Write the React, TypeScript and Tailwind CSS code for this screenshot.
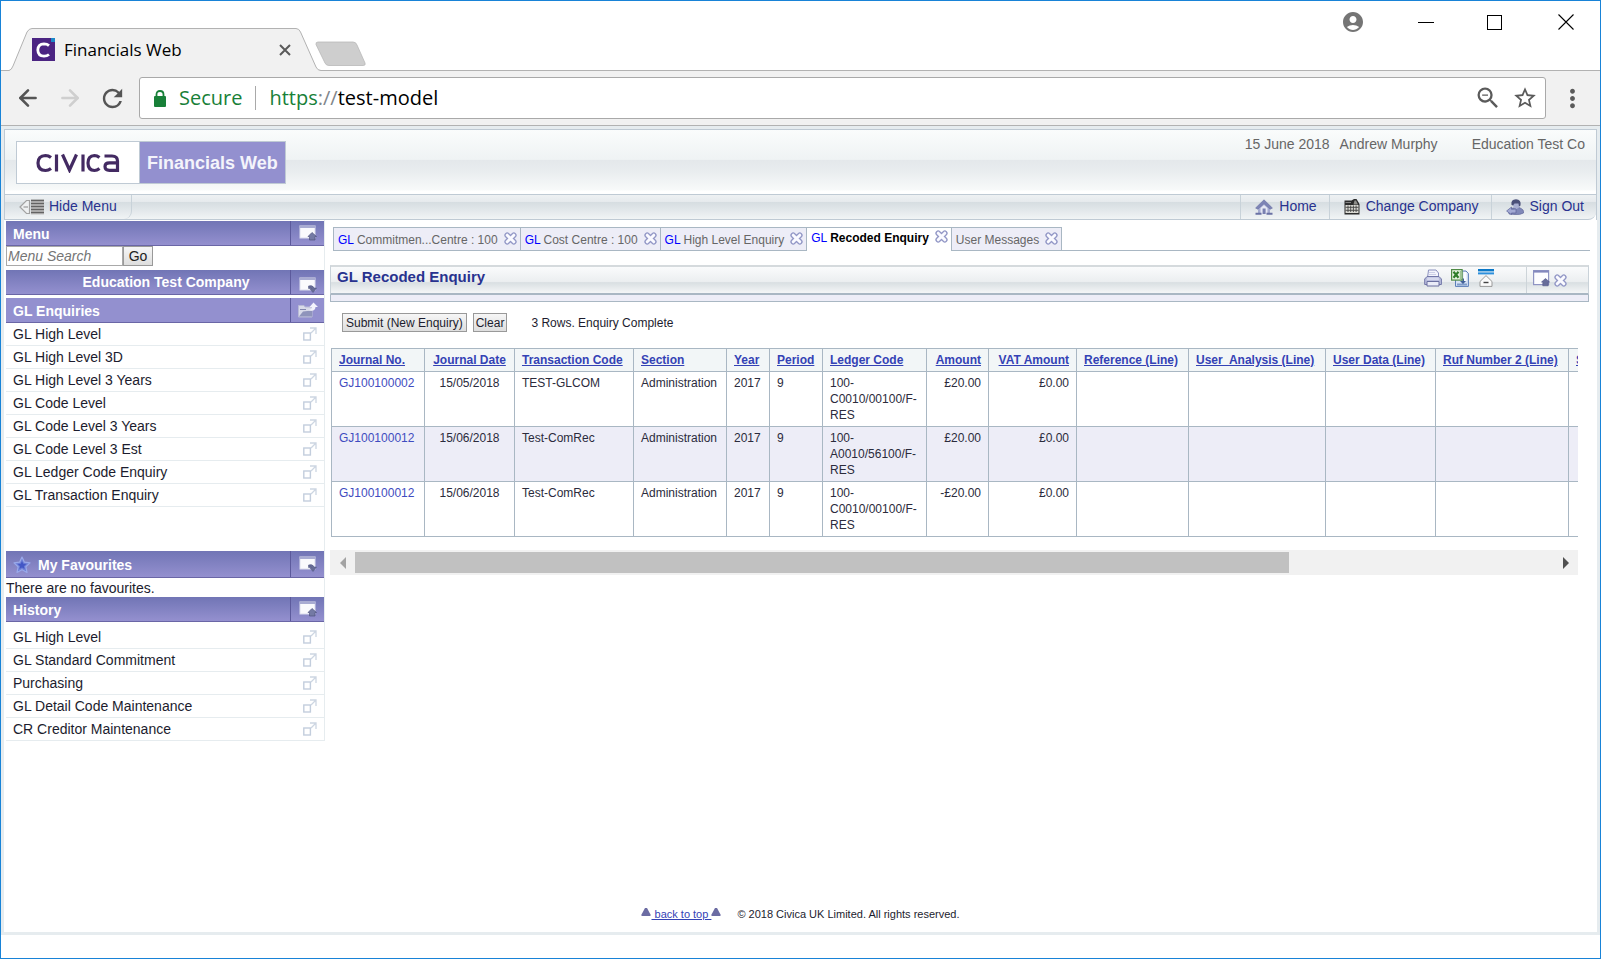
import { useState } from "react";
import type { ReactNode } from "react";
import { ArrowLeft, ArrowRight } from "lucide-react";
import { MdAccountCircle, MdMoreVert, MdRefresh, MdStarBorder, MdZoomOut } from "react-icons/md";

const enquiries = [
  "GL High Level",
  "GL High Level 3D",
  "GL High Level 3 Years",
  "GL Code Level",
  "GL Code Level 3 Years",
  "GL Code Level 3 Est",
  "GL Ledger Code Enquiry",
  "GL Transaction Enquiry",
];

const history = [
  "GL High Level",
  "GL Standard Commitment",
  "Purchasing",
  "GL Detail Code Maintenance",
  "CR Creditor Maintenance",
];

const tabs = [
  { id: "commitment", prefix: "GL", label: "Commitmen...Centre : 100" },
  { id: "cost", prefix: "GL", label: "Cost Centre : 100" },
  { id: "high", prefix: "GL", label: "High Level Enquiry" },
  { id: "recoded", prefix: "GL", label: "Recoded Enquiry" },
  { id: "messages", prefix: "", label: "User Messages" },
];

const columns = [
  { label: "Journal No.", width: "w-[93px]", align: "text-left" },
  { label: "Journal Date", width: "w-[90px]", align: "text-center" },
  { label: "Transaction Code", width: "w-[119px]", align: "text-left" },
  { label: "Section", width: "w-[93px]", align: "text-left" },
  { label: "Year", width: "w-[43px]", align: "text-left" },
  { label: "Period", width: "w-[53px]", align: "text-left" },
  { label: "Ledger Code", width: "w-[104px]", align: "text-left" },
  { label: "Amount", width: "w-[62px]", align: "text-right" },
  { label: "VAT Amount", width: "w-[88px]", align: "text-right" },
  { label: "Reference (Line)", width: "w-[112px]", align: "text-left" },
  { label: "User  Analysis (Line)", width: "w-[137px]", align: "text-left" },
  { label: "User Data (Line)", width: "w-[110px]", align: "text-left" },
  { label: "Ruf Number 2 (Line)", width: "w-[133px]", align: "text-left" },
  { label: "Source", width: "w-[110px]", align: "text-left" },
];

const rows = [
  ["GJ100100002", "15/05/2018", "TEST-GLCOM", "Administration", "2017", "9", "100-C0010/00100/F-RES", "£20.00", "£0.00", "", "", "", "", ""],
  ["GJ100100012", "15/06/2018", "Test-ComRec", "Administration", "2017", "9", "100-A0010/56100/F-RES", "£20.00", "£0.00", "", "", "", "", ""],
  ["GJ100100012", "15/06/2018", "Test-ComRec", "Administration", "2017", "9", "100-C0010/00100/F-RES", "-£20.00", "£0.00", "", "", "", "", ""],
];

function CloseCross() {
  return (
    <svg viewBox="0 0 13 13" className="size-[13px] shrink-0" fill="none" strokeLinecap="round">
      <path d="M3.2 3.2 L9.8 9.8 M9.8 3.2 L3.2 9.8" stroke="#9297c6" strokeWidth="5.6" />
      <path d="M3.2 3.2 L9.8 9.8 M9.8 3.2 L3.2 9.8" stroke="#fafaff" strokeWidth="3" />
    </svg>
  );
}

function PanelIcon({ down = false }: { down?: boolean }) {
  return (
    <svg viewBox="0 0 18 16" className="h-4 w-[18px]">
      <rect x="1" y="1" width="15" height="12" fill="#fafafd" stroke="#dcdded" />
      <rect x="0.5" y="0.5" width="16" height="2.5" fill="#a9acd2" />
      {down ? (
        <path d="M9.5 9 Q13 7.5 15.5 11 H17.5 L14 15.5 L10.500 11.500 H12.500 Q11.500 10.500 9.500 11.500 Z" fill="#666b95" stroke="#4f5480" strokeWidth="0.5" />
      ) : (
        <path d="M13 7.500 L17.500 11.500 H16 V15 H10.500 V11.500 H9 Z" fill="#747aa4" stroke="#50557f" strokeWidth="0.7" />
      )}
    </svg>
  );
}

function FolderIcon() {
  return (
    <svg viewBox="0 0 20 16" className="h-4 w-5">
      <path d="M0.5 3.5 H6 L7 5 H14 V15 H0.5 Z" fill="#d9dbe9" stroke="#b9bbd6" />
      <path d="M1 14.5 L5 9.5 L14 8.5 V14.5 Z" fill="#8f94bb" />
      <path d="M2 7.5 H8" stroke="#8387ae" />
      <path d="M10 8 Q13.5 8 14 5 H11.5 L15.5 0.5 L20 5 H17.5 Q17 10.5 10 8 Z" fill="#f4f4fc" />
    </svg>
  );
}

function OpenIcon() {
  return (
    <svg viewBox="0 0 14 14" className="size-3.5" fill="none">
      <rect x="0.8" y="6" width="6.6" height="7" stroke="#c3cedd" strokeWidth="1.4" />
      <path d="M7 1 H13 V7 M13 1 L8 6" stroke="#cdd6e2" strokeWidth="1.3" />
    </svg>
  );
}

function FavouriteStar() {
  return (
    <svg viewBox="0 0 18 18" className="size-[18px]">
      <path d="M9 1 L11.4 6.2 L17 6.9 L12.9 10.8 L14 16.5 L9 13.7 L4 16.5 L5.1 10.8 L1 6.9 L6.6 6.2 Z" fill="#6f80d6" stroke="#9aa9ea" strokeWidth="1.2" strokeLinejoin="round" />
      <path d="M9 5 L10.3 7.8 L13.2 8.1 L11 10.2 L11.6 13 L9 11.6 L6.4 13 L7 10.2 L4.8 8.1 L7.7 7.8 Z" fill="#4357c6" />
    </svg>
  );
}

function HideMenuIcon() {
  return (
    <svg viewBox="0 0 26 16" className="h-4 w-[26px]" fill="none">
      <path d="M1 8 L7.5 1.5 H10.5 V14.5 H7.5 Z" fill="#eef0f1" stroke="#a2a2a2" strokeWidth="1.2" />
      <path d="M4.5 8 H9" stroke="#8a8a8a" />
      <rect x="12" y="0.5" width="13" height="15" fill="#c2c2c2" />
      <path d="M12 1.5 H25 M12 4.5 H25 M12 7.5 H25 M12 10.5 H25 M12 13.5 H25" stroke="#636363" strokeWidth="1.6" />
    </svg>
  );
}

function HomeIcon() {
  return (
    <svg viewBox="0 0 18 16" className="h-4 w-[18px]">
      <path d="M3 8 V14.5 H15 V8 L9 3 Z" fill="#a5abd0" />
      <path d="M0.6 9 L9 0.8 L17.4 9 L15.2 10.2 L9 4.6 L2.8 10.2 Z" fill="#7d84b5" stroke="#6a71a4" strokeWidth="0.6" />
      <path d="M5.5 9 L9 6 L12.5 9 V15 H5.5 Z" fill="#e6e8f4" />
      <rect x="7.6" y="9.5" width="3" height="5.5" fill="#7980b0" />
      <path d="M0.5 14.8 H6.5 M11.5 14.8 H17.5" stroke="#6a71a4" strokeWidth="2" />
    </svg>
  );
}

function CompanyIcon() {
  return (
    <svg viewBox="0 0 16 16" className="size-4">
      <path d="M0.5 1.5 H7.5 L10 0 H12.5 L15.5 5 V15.5 H0.5 Z" fill="#2c2c2c" />
      <path d="M1.5 3.5 H7" stroke="#8d8d8d" strokeWidth="0.9" />
      <path d="M9.5 5.5 L10.5 1.5 H12 L14 5.5 Z" fill="#8f8f8b" />
      <path d="M1.5 6 H14.5 V14 H1.5 Z" fill="#dadad4" />
      <path d="M1.5 8.3 H14.5 M1.5 11.3 H14.5" stroke="#444" strokeWidth="0.9" />
      <path d="M4 6.5 V13 M6.7 6.5 V13 M9.4 6.5 V13 M12.1 6.5 V13" stroke="#444" strokeWidth="0.9" />
    </svg>
  );
}

function SignOutIcon() {
  return (
    <svg viewBox="0 0 18 16" className="h-4 w-[18px]">
      <path d="M3 15 Q2 10 7 9 L13 8.5 Q18.500 10.500 17.5 14 Q14 16 9 15.5 Z" fill="#8088b8" stroke="#5f6698" strokeWidth="0.7" />
      <path d="M7 3 H13.5 L14 6.5 Q13 9.5 10.5 10 Q7.5 9.5 7 6.5 Z" fill="#a9afd2" />
      <path d="M5.500 6 Q4.500 0.500 10 0.300 Q15.500 0.500 14.500 6.500 L13 7.500 L12.500 4.500 H8.500 L7 6.500 Z" fill="#4b5079" />
      <path d="M0.600 12 L5.5 8 V10.3 L10 10 V14 H5.5 V15.7 Z" fill="#a3aad4" stroke="#5c639a" strokeWidth="0.7" />
    </svg>
  );
}

function PrinterIcon() {
  return (
    <svg viewBox="0 0 18 18" className="size-[18px]">
      <path d="M4.5 1 H12 L14.5 4 V9 H3.5 Z" fill="#f3f4fc" stroke="#8b90be" />
      <path d="M0.7 10 L3 7.5 H15 L17.4 10 V15.5 H0.7 Z" fill="#b9bddd" stroke="#7277a8" />
      <path d="M3.5 8.5 H14.5 L15 11 H3 Z" fill="#d6d9ee" />
      <path d="M3 12.5 H15 V17 H3 Z" fill="#e9ebf7" stroke="#6a6fa0" />
      <path d="M5 3.5 H11 M5 5.5 H12" stroke="#c3c7e2" strokeWidth="0.8" />
    </svg>
  );
}

function ExcelIcon() {
  return (
    <svg viewBox="0 0 18 18" className="size-[18px]">
      <path d="M4.5 2 H15 L17.4 4.5 V17.4 H4.5 Z" fill="#d6e2f5" stroke="#5a7db8" />
      <path d="M12.5 3 H15.5 V12 H12.5 Z" fill="#fafcff" />
      <path d="M6 14.5 H16 V16.5 H6 Z" fill="#7f9cc9" />
      <path d="M11.5 9.5 H13 V12 H15 L12 15 L9 12 H11.5 Z" fill="#3f5f98" />
      <rect x="0.6" y="0.6" width="10.5" height="10.5" fill="#eaf4e4" stroke="#4f8a45" strokeWidth="1.2" />
      <path d="M2.5 2.8 L7.5 8.8 M7.5 2.8 L2.5 8.8" stroke="#2f7d2a" strokeWidth="2.2" />
      <path d="M9.3 2 V10" stroke="#8ab780" />
    </svg>
  );
}

function CollapseIcon() {
  return (
    <svg viewBox="0 0 16 18" className="h-[18px] w-4">
      <rect x="0" y="0" width="16" height="2.4" fill="#0a78c8" />
      <rect x="0" y="3.4" width="16" height="2" fill="#2c8fdc" />
      <path d="M8 6.6 L14 12.5 V17.4 H2 V12.5 Z" fill="#fbfbfb" stroke="#999" />
      <path d="M5.5 13.5 H10.5" stroke="#444" strokeWidth="1.4" />
    </svg>
  );
}

function MaximiseIcon() {
  return (
    <svg viewBox="0 0 17 17" className="size-[17px]">
      <rect x="0.6" y="0.6" width="15" height="14" fill="#fdfdff" stroke="#8f94c3" strokeWidth="1.2" />
      <rect x="0.6" y="0.6" width="15" height="2" fill="#8388bd" />
      <path d="M12.5 8.5 L16.5 12 H15.200 V15.8 H9.800 V12 H8.500 Z" fill="#676c9a" stroke="#4f5486" strokeWidth="0.6" />
    </svg>
  );
}

function BrowserFrame() {
  return (
    <header className="bg-white">
      <div className="flex h-[70px] items-start justify-between border-b border-[#b2b2b2]">
        <div className="flex">
          {/* Active tab, one pixel over the strip's border so it joins the toolbar */}
          <div className="relative mt-[27px] ml-2 h-[43px] w-[312px]">
            <svg viewBox="0 0 312 43" className="absolute inset-0 h-full w-full">
              <path d="M0 42.5 Q2.5 42 4 38 L18 4 Q20 0.5 23 0.5 H287 Q290 0.5 291.5 4 L307 39 Q308.5 42.5 312 42.5 V43 H0 Z" fill="#f1f1f1" />
              <path d="M0 42.5 Q2.5 42 4 38 L18 4 Q20 0.5 23 0.5 H287 Q290 0.5 291.5 4 L307 39 Q308.5 42.5 312 42.5" fill="none" stroke="#b2b2b2" />
            </svg>
            <div className="relative flex h-full items-center pr-[30px] pl-[23px]">
              <svg viewBox="0 0 23 23" className="size-[23px]">
                <rect width="23" height="23" fill="#4b2482" />
                <rect x="19" width="4" height="4" fill="#1b86c8" />
                <path d="M17 7.6 Q15 5.8 12 5.8 Q6 6 5.8 12 Q6 18 12 18.2 Q15 18.2 17 16.5" fill="none" stroke="#fff" strokeWidth="2.8" />
              </svg>
              <span className="ml-[9px] flex-1 text-[17px] leading-6 text-black">Financials Web</span>
              <button type="button" aria-label="Close tab">
                <svg viewBox="0 0 12 12" className="size-3" stroke="#5a5a5a" strokeWidth="2">
                  <path d="M1 1 L11 11 M11 1 L1 11" />
                </svg>
              </button>
            </div>
          </div>
          <button type="button" aria-label="New tab" className="mt-[37px] -ml-1.5">
            <svg viewBox="0 0 52 27" className="h-[27px] w-[52px]">
              <path d="M3 1 H38 Q41 1 42 4 L50 22 Q51 24.5 48 24.5 H14 Q11 24.5 10 22 L1 3.5 Q0.5 1 3 1 Z" fill="#cecece" stroke="#b9b9b9" strokeWidth="0.8" />
            </svg>
          </button>
        </div>
        <div className="flex items-center pt-[9px] pr-[26px]">
          <MdAccountCircle className="mr-[53px] size-6 text-[#757575]" />
          <button type="button" aria-label="Minimise" className="mr-[53px] h-px w-4 bg-black" />
          <button type="button" aria-label="Maximise" className="mr-14 size-[15px] border border-black" />
          <button type="button" aria-label="Close">
            <svg viewBox="0 0 16 16" className="size-4" stroke="#000" strokeWidth="1.1">
              <path d="M0.5 0.5 L15.5 15.5 M15.5 0.5 L0.5 15.5" />
            </svg>
          </button>
        </div>
      </div>
      <div className="flex h-[55px] items-center border-b border-[#b2b2b2] bg-[#f1f1f1] pr-[13px] pl-3.5">
        <button type="button" aria-label="Back">
          <ArrowLeft className="size-[26px] text-[#555]" strokeWidth={2.4} />
        </button>
        <button type="button" aria-label="Forward" className="ml-4">
          <ArrowRight className="size-[26px] text-[#cfcfcf]" strokeWidth={2.4} />
        </button>
        <button type="button" aria-label="Reload" className="ml-[15px]">
          <MdRefresh className="size-[29px] text-[#555]" />
        </button>
        <div className="ml-3 flex h-[42px] flex-1 items-center rounded-[3px] border border-[#a9a9a9] bg-white pr-[7px] pl-3.5">
          <svg viewBox="0 0 12 17" className="h-[17px] w-3">
            <rect y="6" width="12" height="11" rx="1" fill="#188038" />
            <path d="M2.5 7 V4.5 Q2.5 1 6 1 Q9.5 1 9.5 4.5 V7" fill="none" stroke="#188038" strokeWidth="1.8" />
          </svg>
          <span className="ml-[13px] text-[20px] text-[#188038]">Secure</span>
          <span className="mx-[13px] h-6 w-px bg-[#a9a9a9]" />
          <span className="flex-1 text-[20px] text-black">
            <span className="text-[#188038]">https</span>
            <span className="text-[#80868b]">://</span>test-model
          </span>
          <MdZoomOut className="size-[28px] text-[#5a5a5a]" />
          <MdStarBorder className="ml-2.5 size-[26px] text-[#5a5a5a]" />
        </div>
        <button type="button" aria-label="Browser menu" className="ml-3">
          <MdMoreVert className="size-[29px] text-[#5a5a5a]" />
        </button>
      </div>
    </header>
  );
}

function NavLink({ icon, children }: { icon: ReactNode; children: ReactNode }) {
  return (
    <a href="#" className="flex h-full items-center gap-1.5 border-l border-[#c8d2d9] pr-3 pl-3.5 text-[14px] text-[#28328f]">
      {icon}
      <span className="pb-0.5">{children}</span>
    </a>
  );
}

function AppHeader() {
  return (
    <div className="border border-b-0 border-[#bfcad4]">
      <div className="flex h-[65px] items-start justify-between border-b border-[#bfcad4] bg-[linear-gradient(to_bottom,#fafcfc_0%,#eff3f4_46%,#e4e8eb_47%,#e9edef_65%,#f8fafa_94%,#ffffff_95%)] pl-[11px]">
        <div className="mt-[11px] flex h-[43px] border border-[#bfcad4] bg-white">
          <div className="flex w-[123px] items-center justify-center border-r border-[#bfcad4]">
            <svg viewBox="0 0 84 20" className="h-5 w-[84px]" fill="none" stroke="#432a62" strokeWidth="3.2">
              <path d="M15 4.5 Q12.5 2.5 9.5 2.5 Q2 2.8 2 10 Q2 17.2 9.5 17.5 Q12.5 17.5 15 15.5" />
              <path d="M20.5 1.5 V18.5" />
              <path d="M26.5 1.5 L33.5 17 L40.5 1.5" />
              <path d="M47 1.5 V18.5" />
              <path d="M63.5 4.5 Q61 2.5 58.5 2.5 Q52 2.8 52 10 Q52 17.2 58.5 17.5 Q61 17.5 63.5 15.5" />
              <path d="M68.5 3 H76 Q81.5 3 81.5 8 V17.3 H73.5 Q69 17.3 69 13.5 Q69 9.8 73.5 9.8 H81" />
            </svg>
          </div>
          <div className="flex items-center bg-[#9390cf] px-[7px] pt-0.5 text-[18px] font-bold text-[#f4f4fb]">Financials Web</div>
        </div>
        <div className="flex pt-1.5 pr-[11px] text-[14px] leading-4 text-[#666]">
          <span>15 June 2018</span>
          <span className="ml-2.5">Andrew Murphy</span>
          <span className="ml-[34px]">Education Test Co</span>
        </div>
      </div>
      <nav className="flex h-[25px] items-center justify-between rounded-br-lg border-b border-[#bfcad4] bg-[linear-gradient(to_bottom,#eef1f3_0%,#e6eaed_28%,#d6dde1_30%,#e3e8eb_65%,#f1f4f5_100%)]">
        <button type="button" className="flex h-full items-center gap-1 rounded-br-lg border-r border-[#c8d2d9] pr-3.5 pl-3.5 text-[14px] text-[#28328f]">
          <HideMenuIcon />
          <span className="pb-0.5">Hide Menu</span>
        </button>
        <div className="flex h-full">
          <NavLink icon={<HomeIcon />}>Home</NavLink>
          <NavLink icon={<CompanyIcon />}>Change Company</NavLink>
          <NavLink icon={<SignOutIcon />}>Sign Out</NavLink>
        </div>
      </nav>
    </div>
  );
}

function PanelHeader({ title, icon, star = false, centered = false, flat = false }: { title: string; icon: ReactNode; star?: boolean; centered?: boolean; flat?: boolean }) {
  const layout = centered ? "justify-center pl-9" : star ? "pt-0.5 pl-[7px]" : "pt-0.5 pl-[7px]";

  return (
    <div className={`flex border-b border-[#6a66a6] text-[14px] font-bold text-white ${star ? "h-[27px]" : "h-[25px]"} ${flat ? "bg-[#9390cf]" : "bg-linear-to-b from-[#7175b5] to-[#9490cf]"}`}>
      <h2 className={`flex flex-1 items-center gap-[7px] ${layout}`}>
        {star && <FavouriteStar />}
        {title}
      </h2>
      <button type="button" aria-label={`Toggle ${title}`} className={`flex w-[34px] items-center justify-center border-l border-[#5c5a9c] ${centered ? "pt-1.5" : ""}`}>
        {icon}
      </button>
    </div>
  );
}

function MenuList({ items }: { items: string[] }) {
  return (
    <ul>
      {items.map((item) => (
        <li key={item} className="flex h-[23px] items-center justify-between border-b border-[#e6ecef] px-[7px]">
          <a href="#" className="text-[14px] leading-5 text-[#1c1c2e]">{item}</a>
          <button type="button" aria-label={`Open ${item} in new window`}>
            <OpenIcon />
          </button>
        </li>
      ))}
    </ul>
  );
}

function Sidebar() {
  const [search, setSearch] = useState("");

  return (
    <aside className="w-[319px] shrink-0 self-start border-r border-[#e6ecef] pt-px">
      <PanelHeader title="Menu" icon={<PanelIcon />} />
      <form className="flex h-5" onSubmit={(e) => e.preventDefault()}>
        <input
          type="text"
          aria-label="Menu Search"
          placeholder="Menu Search"
          value={search}
          onChange={(e) => setSearch(e.target.value)}
          className="w-[117px] border border-[#a9a9a9] px-px text-[14px] italic placeholder:text-[#757575]"
        />
        <button type="submit" className="w-[30px] border border-[#999] bg-linear-to-b from-[#f6f6f6] to-[#dedede] text-[14px] leading-4 text-[#222]">
          Go
        </button>
      </form>
      <div className="mt-1">
        <PanelHeader title="Education Test Company" icon={<PanelIcon down />} centered />
      </div>
      <div className="mt-[3px]">
        <PanelHeader title="GL Enquiries" icon={<FolderIcon />} flat />
      </div>
      <MenuList items={enquiries} />
      <div className="mt-11">
        <PanelHeader title="My Favourites" icon={<PanelIcon down />} star />
      </div>
      <p className="pt-0.5 text-[14px] leading-[17px] text-[#1c1c2e]">There are no favourites.</p>
      <PanelHeader title="History" icon={<PanelIcon />} />
      <div className="mt-1">
        <MenuList items={history} />
      </div>
    </aside>
  );
}

function TabBar() {
  const [active, setActive] = useState("recoded");

  return (
    <div className="mt-[7px] mr-px ml-[3px] flex h-6">
      {tabs.map((tab, index) => (
        <div
          key={tab.id}
          className={`flex items-center gap-1.5 border-t border-r border-[#a9b7c3] pr-[3px] pl-1 text-[12px] ${index === 0 ? "border-l" : ""} ${tab.id === active
              ? "bg-white pb-[3px] font-bold text-black"
              : "border-b bg-[#ededf7] pt-0.5 text-[#666]"
            }`}
        >
          <button type="button" onClick={() => setActive(tab.id)} className="whitespace-nowrap">
            {tab.prefix && <span className="font-normal text-[#0000ff]">{tab.prefix} </span>}
            {tab.label}
          </button>
          <button type="button" aria-label={`Close ${tab.label}`} className="pb-1">
            <CloseCross />
          </button>
        </div>
      ))}
      <div className="flex-1 border-b border-[#a9b7c3]" />
    </div>
  );
}

function TitleBar() {
  return (
    <div className="mt-3.5 mr-0.5">
      <div className="flex h-[30px] justify-between border-x border-t-2 border-b-2 border-x-[#c9d2d9] border-t-[#d5dadd] border-b-[#a9b7c3] bg-[linear-gradient(to_bottom,#fafbfc_0%,#ebeef0_57%,#d9dfe2_60%,#f4f6f7_100%)]">
        <h1 className="pl-1.5 text-[15px] leading-5 font-bold text-[#28328f]">GL Recoded Enquiry</h1>
        <div className="flex">
          <div className="flex items-center gap-[9px] pr-8 pb-1">
            <button type="button" aria-label="Print"><PrinterIcon /></button>
            <button type="button" aria-label="Export to Excel"><ExcelIcon /></button>
            <button type="button" aria-label="Collapse"><CollapseIcon /></button>
          </div>
          <div className="flex items-center gap-1 border-l border-[#cdd4d9] pr-[21px] pb-1 pl-1.5">
            <button type="button" aria-label="Maximise panel"><MaximiseIcon /></button>
            <button type="button" aria-label="Close panel" className="pt-1"><CloseCross /></button>
          </div>
        </div>
      </div>
      <div className="h-[7px] border-x border-b border-[#a9b7c3] bg-[#ededf7]" />
    </div>
  );
}

function ResultsTable() {
  return (
    <div className="mt-4 mr-[13px] overflow-hidden pl-px">
      <table className="w-[1348px] table-fixed border-collapse text-[12px] leading-4 text-[#2b2b3c]">
        <thead>
          <tr className="h-[23px] bg-[#f2f6f7]">
            {columns.map((col) => (
              <th key={col.label} scope="col" className={`border border-[#a9b7c3] px-[7px] font-bold ${col.width} ${col.align}`}>
                <a href="#" className="whitespace-pre text-[#3442b5] underline">{col.label}</a>
              </th>
            ))}
          </tr>
        </thead>
        <tbody>
          {rows.map((row, index) => (
            <tr key={index} className="h-[55px] even:bg-[#ededf7]">
              {row.map((cell, i) => (
                <td key={i} className={`border border-[#a9b7c3] px-[7px] pt-[3px] align-top ${columns[i].align}`}>
                  {i === 0 ? <a href="#" className="text-[#3f4cc0]">{cell}</a> : cell}
                </td>
              ))}
            </tr>
          ))}
        </tbody>
      </table>
    </div>
  );
}

function ScrollStrip() {
  return (
    <div className="mt-[13px] mr-[13px] flex h-[25px] items-center bg-[#f1f1f1]">
      <button type="button" aria-label="Scroll left" className="flex w-[25px] justify-center">
        <svg viewBox="0 0 6 12" className="h-3 w-1.5" fill="#a3a3a3"><path d="M6 0 V12 L0 6 Z" /></svg>
      </button>
      <div className="flex-1">
        <div className="h-[21px] w-[78%] bg-[#c1c1c1]" />
      </div>
      <button type="button" aria-label="Scroll right" className="flex w-[25px] justify-center">
        <svg viewBox="0 0 6 12" className="h-3 w-1.5" fill="#505050"><path d="M0 0 V12 L6 6 Z" /></svg>
      </button>
    </div>
  );
}

function Triangle() {
  return (
    <svg viewBox="0 0 10 8" className="mb-1 h-2 w-2.5" fill="#6c6ca3">
      <path d="M4 0 H6 L9.5 6.5 V8 H0.5 V6.5 Z" />
    </svg>
  );
}

export default function App() {
  return (
    <div className="flex min-h-screen flex-col border border-[#1883d7] bg-white font-['Liberation_Sans',Arial,sans-serif]">
      <div className="font-['Open_Sans',sans-serif]">
        <BrowserFrame />
      </div>
      <div className="mb-[23px] flex flex-1 flex-col border-3 border-[#e6ecef]">
        <AppHeader />
        <main className="flex flex-1 pr-1.5 pl-0.5">
          <Sidebar />
          <section className="ml-[5px] min-w-0 flex-1">
            <TabBar />
            <TitleBar />
            <div className="mt-[11px] flex items-center pl-3 text-[12px] text-[#1c1c2e]">
              <button type="button" className="h-[19px] border border-[#999] bg-linear-to-b from-[#f6f6f6] to-[#dedede] px-[3px] leading-4">Submit (New Enquiry)</button>
              <button type="button" className="ml-1.5 h-[19px] border border-[#999] bg-linear-to-b from-[#f6f6f6] to-[#dedede] px-0.5 leading-4">Clear</button>
              <span className="ml-6 leading-4">3 Rows. Enquiry Complete</span>
            </div>
            <ResultsTable />
            <ScrollStrip />
          </section>
        </main>
        <footer className="flex items-center justify-center pb-2.5 text-[11px] leading-4 text-[#1c1c2e]">
          <a href="#" className="flex items-center text-[#3442b5]">
            <Triangle />
            <span className="whitespace-pre underline"> back to top </span>
            <Triangle />
          </a>
          <span className="ml-4">© 2018 Civica UK Limited. All rights reserved.</span>
        </footer>
      </div>
    </div>
  );
}
